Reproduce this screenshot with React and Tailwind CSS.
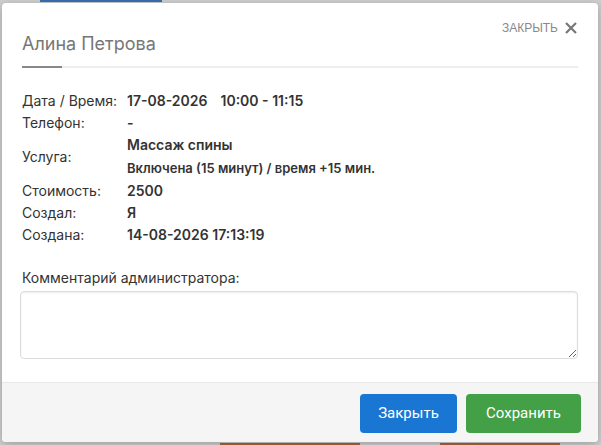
import React from "react";

function Row({ label, children }) {
  return (
    <div className="grid grid-cols-[105px_1fr] items-center min-h-[22px]">
      <div className="text-[14px] leading-[22px] text-[#333]">{label}</div>
      <div className="text-[14px] leading-[22px] font-semibold text-[#333]">{children}</div>
    </div>
  );
}

export default function App() {
  return (
    <div className="w-[601px] h-[445px] bg-[#cfcfcf] overflow-hidden relative" style={{ fontFamily: "Inter, 'Noto Sans', sans-serif" }}>
      <div className="absolute left-[40px] top-0 w-[122px] h-[2px] bg-[#3a6fb0]" />
      <div className="absolute left-[220px] bottom-0 w-[140px] h-[2px] bg-[#b0603c]" />
      <div className="absolute left-[440px] bottom-0 w-[120px] h-[2px] bg-[#b0603c]" />
      <div className="absolute left-[2px] top-[3px] w-[596px] h-[439px] bg-white rounded-[4px] shadow-[0_2px_8px_rgba(0,0,0,0.25)] flex flex-col overflow-hidden">
        <div className="px-[20px] flex-1">
          <div className="relative pt-[27px]">
            <div className="text-[18px] leading-[28px] text-[#777]">Алина Петрова</div>
            <div className="absolute right-[1px] top-[18px] flex items-center gap-[7px] text-[#888]">
              <span className="text-[12px] leading-[14px]" style={{ fontFamily: "'Liberation Sans', Arial, sans-serif" }}>ЗАКРЫТЬ</span>
              <svg width="12" height="12" viewBox="0 0 12 12" className="block">
                <path d="M1 1L11 11M11 1L1 11" stroke="#777" strokeWidth="2.2" strokeLinecap="butt" />
              </svg>
            </div>
            <div className="mt-[8px] h-[2px] bg-[#eeeeee] flex">
              <div className="w-[40px] h-[2px] bg-[#888]" />
            </div>
          </div>

          <div className="pt-[22px] flex flex-col">
            <Row label="Дата / Время:">
              <span>17-08-2026</span>
              <span className="ml-[13px]">10:00 - 11:15</span>
            </Row>
            <Row label="Телефон:">-</Row>
            <div className="grid grid-cols-[105px_1fr] items-center">
              <div className="text-[14px] leading-[22px] text-[#333]">Услуга:</div>
              <div className="font-semibold text-[#333]">
                <div className="text-[14px] leading-[22px]">Массаж спины</div>
                <div className="text-[13px] leading-[24px]">Включена (15 минут) / время +15 мин.</div>
              </div>
            </div>
            <Row label="Стоимость:">2500</Row>
            <Row label="Создал:">Я</Row>
            <Row label="Создана:">14-08-2026 17:13:19</Row>
          </div>

          <div className="mt-[21px] text-[14px] leading-[22px] text-[#333]">Комментарий администратора:</div>
          <textarea className="mt-[2px] block w-[558px] h-[68px] -ml-[2px] border border-[#dddddd] rounded-[4px] shadow-[inset_0_1px_2px_rgba(0,0,0,0.08)] resize-y outline-none" />
        </div>

        <div className="h-[60px] shrink-0 bg-[#f5f5f5] border-t border-[#e8e8e8] flex justify-end items-start pt-[11px] pr-[17px] gap-[9px]" style={{ fontFamily: "Roboto, 'Noto Sans', sans-serif" }}>
          <button className="w-[97px] h-[39px] rounded-[4px] bg-[#1976d2] text-white text-[15px]">Закрыть</button>
          <button className="w-[115px] h-[39px] rounded-[4px] bg-[#43a047] text-white text-[15px]">Сохранить</button>
        </div>
      </div>
    </div>
  );
}
